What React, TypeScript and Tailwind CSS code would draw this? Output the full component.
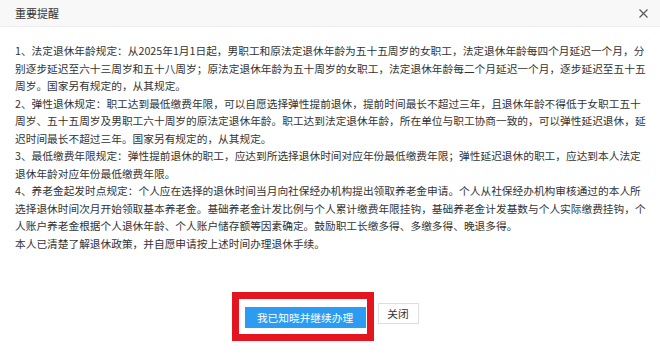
import React from 'react';

const paragraphs: string[][] = [
  [
    '1、法定退休年龄规定：从2025年1月1日起，男职工和原法定退休年龄为五十五周岁的女职工，法定退休年龄每四个月延迟一个月，分',
    '别逐步延迟至六十三周岁和五十八周岁；原法定退休年龄为五十周岁的女职工，法定退休年龄每二个月延迟一个月，逐步延迟至五十五',
    '周岁。国家另有规定的，从其规定。',
  ],
  [
    '2、弹性退休规定：职工达到最低缴费年限，可以自愿选择弹性提前退休，提前时间最长不超过三年，且退休年龄不得低于女职工五十',
    '周岁、五十五周岁及男职工六十周岁的原法定退休年龄。职工达到法定退休年龄，所在单位与职工协商一致的，可以弹性延迟退休，延',
    '迟时间最长不超过三年。国家另有规定的，从其规定。',
  ],
  [
    '3、最低缴费年限规定：弹性提前退休的职工，应达到所选择退休时间对应年份最低缴费年限；弹性延迟退休的职工，应达到本人法定',
    '退休年龄对应年份最低缴费年限。',
  ],
  [
    '4、养老金起发时点规定：个人应在选择的退休时间当月向社保经办机构提出领取养老金申请。个人从社保经办机构审核通过的本人所',
    '选择退休时间次月开始领取基本养老金。基础养老金计发比例与个人累计缴费年限挂钩，基础养老金计发基数与个人实际缴费挂钩，个',
    '人账户养老金根据个人退休年龄、个人账户储存额等因素确定。鼓励职工长缴多得、多缴多得、晚退多得。',
  ],
  ['本人已清楚了解退休政策，并自愿申请按上述时间办理退休手续。'],
];

function App() {
  return (
    <div className="h-[357px] w-full overflow-hidden bg-white text-[#333] font-['Noto_Sans_CJK_SC','Noto_Sans',sans-serif]">
      {/* Title bar */}
      <header className="flex h-[27px] items-center justify-between border-b border-[#eeeeee] bg-[#f8f8f8] pl-[15px] pr-[9px]">
        <span className="text-[11px] leading-none">重要提醒</span>
        <button className="flex h-4 w-4 items-center justify-center text-[#555]">
          <svg width="9" height="9" viewBox="0 0 9 9" fill="none" stroke="currentColor" strokeWidth="1.1">
            <path d="M0.5 0.5 L8.5 8.5 M8.5 0.5 L0.5 8.5" />
          </svg>
        </button>
      </header>

      {/* Body */}
      <div className="px-[15px] pt-[15px]">
        {paragraphs.map((lines, i) => (
          <p key={i} className="whitespace-nowrap text-[10.7px] leading-[17.5px] text-[#333]">
            {lines.map((line, j) => (
              <React.Fragment key={j}>
                {line}
                {j < lines.length - 1 && <br />}
              </React.Fragment>
            ))}
          </p>
        ))}
      </div>

      {/* Buttons */}
      <div className="mt-[51px] flex justify-center gap-[12px] pl-[3px]">
        <span className="relative">
          <button className="h-[21px] w-[121px] bg-[#2b9cf2] text-[10.7px] leading-[21px] text-white">
            我已知晓并继续办理
          </button>
          <span className="pointer-events-none absolute -left-[13px] -top-[11px] -right-[8px] -bottom-[13px] border-[7px] border-[#e4151f]" />
        </span>
        <button className="h-[21px] w-[41px] border border-[#dedede] bg-white text-[10.7px] leading-[19px] text-[#333]">
          关闭
        </button>
      </div>
    </div>
  );
}

export default App;
